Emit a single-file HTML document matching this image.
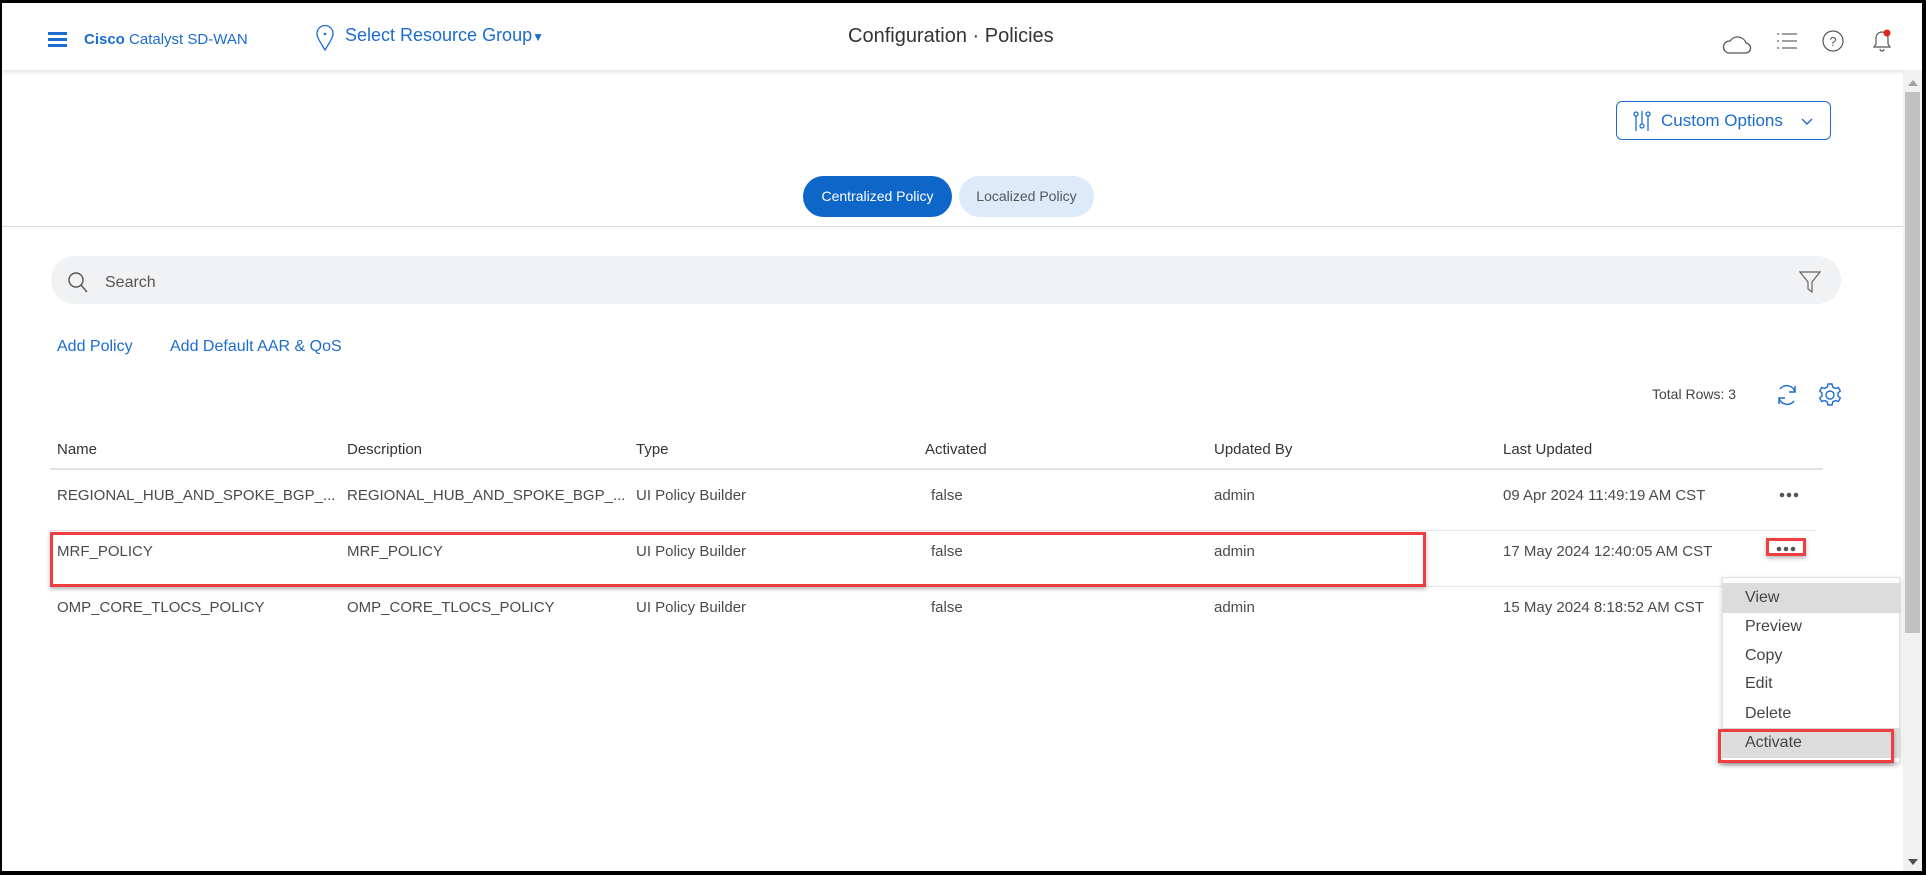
<!DOCTYPE html>
<html><head><meta charset="utf-8">
<style>
*{margin:0;padding:0;box-sizing:border-box}
body{width:1926px;height:875px;background:#000;position:relative;overflow:hidden;font-family:"Liberation Sans",Arial,sans-serif}
.page{position:absolute;left:2px;top:3px;width:1920px;height:868px;background:#fff;overflow:hidden}
.a{position:absolute;white-space:nowrap}
.hdr{position:absolute;left:0;top:0;width:1920px;height:67px;background:#fff;box-shadow:0 2px 4px rgba(0,0,0,.12)}
.blue{color:#1d6ccf}
.td{font-size:15px;color:#4a4a4a}
.th{font-size:15px;color:#333}
.mi{position:absolute;left:0;width:178px;height:30px;font-size:16px;color:#444;padding-left:22px;line-height:30px}
</style></head><body>
<div class="page">
<div class="hdr">
  <div class="a" style="left:46px;top:29px;width:19px;height:3px;background:#1d6ccf"></div>
  <div class="a" style="left:46px;top:35px;width:19px;height:3px;background:#1d6ccf"></div>
  <div class="a" style="left:46px;top:41px;width:19px;height:3px;background:#1d6ccf"></div>
  <div class="a blue" style="left:82px;top:28px;font-size:15px"><b>Cisco</b> Catalyst SD-WAN</div>
  <svg class="a" style="left:313px;top:21px" width="20" height="28" viewBox="0 0 20 28"><path d="M10 26C6 19 2 14 2 9.5A8 8 0 0 1 18 9.5C18 14 14 19 10 26Z" fill="none" stroke="#1d6ccf" stroke-width="1.3"/><circle cx="10" cy="10" r="1.3" fill="#1d6ccf"/></svg>
  <div class="a blue" style="left:343px;top:22px;font-size:18px">Select Resource Group<span style="font-size:12px">&#9660;</span></div>
  <div class="a" style="left:846px;top:22px;font-size:20px;color:#333">Configuration · Policies</div>
  <svg class="a" style="left:1720px;top:30px" width="30" height="22" viewBox="0 0 30 22"><path d="M7 20H23A5 5 0 0 0 24 10A9 9 0 0 0 8 8A6 6 0 0 0 7 20Z" fill="none" stroke="#555" stroke-width="1.3"/></svg>
  <svg class="a" style="left:1775px;top:28px" width="20" height="20" viewBox="0 0 20 20" stroke="#666" stroke-width="1.2"><path d="M0 3h2M5 3h15M0 10h2M5 10h15M0 17h2M5 17h15"/></svg>
  <svg class="a" style="left:1819px;top:26px" width="24" height="24" viewBox="0 0 24 24"><circle cx="12" cy="12" r="10" fill="none" stroke="#555" stroke-width="1.2"/><text x="12" y="17" font-size="13" text-anchor="middle" fill="#555" font-family="Liberation Sans">?</text></svg>
  <svg class="a" style="left:1868px;top:25px" width="24" height="26" viewBox="0 0 24 26"><path d="M4 19h16l-2-3v-6a6 6 0 0 0-12 0v6z M10 21a2 2 0 0 0 4 0" fill="none" stroke="#555" stroke-width="1.2"/><circle cx="17" cy="5" r="3.5" fill="#e0281d"/></svg>
</div>
<div class="a" style="left:1901px;top:67px;width:19px;height:801px;background:#f1f1f1"></div>
<div class="a" style="left:1906px;top:77px;width:0;height:0;border-left:5px solid transparent;border-right:5px solid transparent;border-bottom:6px solid #a3a3a3"></div>
<div class="a" style="left:1903px;top:89px;width:15px;height:541px;background:#c1c1c1"></div>
<div class="a" style="left:1906px;top:856px;width:0;height:0;border-left:5px solid transparent;border-right:5px solid transparent;border-top:6px solid #505050"></div>

<div class="a" style="left:1614px;top:98px;width:215px;height:39px;border:1.5px solid #1d6ccf;border-radius:6px"></div>
<svg class="a" style="left:1630px;top:107px" width="20" height="22" viewBox="0 0 20 22" fill="none" stroke="#1d6ccf" stroke-width="1.3"><circle cx="4" cy="4" r="2"/><path d="M4 6v15"/><circle cx="10" cy="16" r="2"/><path d="M10 1v13"/><circle cx="16" cy="4" r="2"/><path d="M16 6v15"/></svg>
<div class="a blue" style="left:1659px;top:108px;font-size:17px">Custom Options</div>
<svg class="a" style="left:1798px;top:114px" width="14" height="10" viewBox="0 0 14 10"><path d="M2 2l5 5 5-5" fill="none" stroke="#1d6ccf" stroke-width="1.4"/></svg>

<div class="a" style="left:801px;top:173px;width:149px;height:41px;border-radius:21px;background:#0f66c9;color:#fff;font-size:14px;line-height:41px;text-align:center">Centralized Policy</div>
<div class="a" style="left:957px;top:173px;width:135px;height:41px;border-radius:21px;background:#dceafa;color:#555;font-size:14px;line-height:41px;text-align:center">Localized Policy</div>
<div class="a" style="left:0;top:223px;width:1901px;height:1px;background:#dcdcdc"></div>

<div class="a" style="left:49px;top:253px;width:1790px;height:48px;border-radius:24px;background:#f1f2f4"></div>
<svg class="a" style="left:65px;top:268px" width="22" height="22" viewBox="0 0 22 22" fill="none" stroke="#555" stroke-width="1.4"><circle cx="9" cy="9" r="7"/><path d="M14 14l6 7"/></svg>
<div class="a" style="left:103px;top:271px;font-size:16px;color:#555">Search</div>
<svg class="a" style="left:1797px;top:267px" width="22" height="24" viewBox="0 0 22 24" fill="none" stroke="#666" stroke-width="1.2"><path d="M1 2h20l-8 10v10l-4-3v-7z"/></svg>

<div class="a blue" style="left:55px;top:335px;font-size:16px">Add Policy</div>
<div class="a blue" style="left:168px;top:335px;font-size:16px">Add Default AAR &amp; QoS</div>

<div class="a" style="left:1650px;top:383px;font-size:14px;color:#444">Total Rows: 3</div>
<svg class="a" style="left:1773px;top:380px" width="24" height="24" viewBox="0 0 24 24" fill="none" stroke="#1d6ccf" stroke-width="1.5"><path d="M20 9A8.5 8.5 0 0 0 5 6M4 15a8.5 8.5 0 0 0 15 3"/><path d="M20 3v6h-6M4 21v-6h6"/></svg>
<svg class="a" style="left:1815px;top:379px" width="26" height="26" viewBox="0 0 26 26" fill="none" stroke="#1d6ccf" stroke-width="1.4"><circle cx="13" cy="13" r="4"/><path d="M11 2h4l.7 3 2.6 1.5 3-1 2 3.5-2.3 2 0 3 2.3 2-2 3.5-3-1-2.6 1.5-.7 3h-4l-.7-3-2.6-1.5-3 1-2-3.5 2.3-2v-3l-2.3-2 2-3.5 3 1L10.3 5z"/></svg>

<div class="a th" style="left:55px;top:438px">Name</div>
<div class="a th" style="left:345px;top:438px">Description</div>
<div class="a th" style="left:634px;top:438px">Type</div>
<div class="a th" style="left:923px;top:438px">Activated</div>
<div class="a th" style="left:1212px;top:438px">Updated By</div>
<div class="a th" style="left:1501px;top:438px">Last Updated</div>
<div class="a" style="left:48px;top:465px;width:1773px;height:2px;background:#e2e2e2"></div>

<div class="a td" style="left:55px;top:484px">REGIONAL_HUB_AND_SPOKE_BGP_...</div>
<div class="a td" style="left:345px;top:484px">REGIONAL_HUB_AND_SPOKE_BGP_...</div>
<div class="a td" style="left:634px;top:484px">UI Policy Builder</div>
<div class="a td" style="left:929px;top:484px">false</div>
<div class="a td" style="left:1212px;top:484px">admin</div>
<div class="a td" style="left:1501px;top:484px">09 Apr 2024 11:49:19 AM CST</div>
<svg class="a" style="left:1776px;top:489px" width="22" height="6" viewBox="0 0 22 6" fill="#555"><circle cx="4" cy="3" r="2.3"/><circle cx="11" cy="3" r="2.3"/><circle cx="18" cy="3" r="2.3"/></svg>
<div class="a" style="left:48px;top:527px;width:1765px;height:1px;background:#e6e6e6"></div>

<div class="a td" style="left:55px;top:540px">MRF_POLICY</div>
<div class="a td" style="left:345px;top:540px">MRF_POLICY</div>
<div class="a td" style="left:634px;top:540px">UI Policy Builder</div>
<div class="a td" style="left:929px;top:540px">false</div>
<div class="a td" style="left:1212px;top:540px">admin</div>
<div class="a td" style="left:1501px;top:540px">17 May 2024 12:40:05 AM CST</div>
<svg class="a" style="left:1773px;top:543px" width="22" height="6" viewBox="0 0 22 6" fill="#555"><circle cx="4" cy="3" r="2.3"/><circle cx="11" cy="3" r="2.3"/><circle cx="18" cy="3" r="2.3"/></svg>
<div class="a" style="left:48px;top:583px;width:1765px;height:1px;background:#e6e6e6"></div>

<div class="a td" style="left:55px;top:596px">OMP_CORE_TLOCS_POLICY</div>
<div class="a td" style="left:345px;top:596px">OMP_CORE_TLOCS_POLICY</div>
<div class="a td" style="left:634px;top:596px">UI Policy Builder</div>
<div class="a td" style="left:929px;top:596px">false</div>
<div class="a td" style="left:1212px;top:596px">admin</div>
<div class="a td" style="left:1501px;top:596px">15 May 2024 8:18:52 AM CST</div>

<div class="a" style="left:48px;top:529px;width:1376px;height:55px;border:3px solid #ee3e42;box-shadow:0 2px 4px rgba(0,0,0,.3)"></div>
<div class="a" style="left:1764px;top:535px;width:40px;height:18px;border:3px solid #ee3e42;box-shadow:0 2px 4px rgba(0,0,0,.3)"></div>

<div class="a" style="left:1720px;top:574px;width:178px;height:186px;background:#fff;border:1px solid #e0e0e0;box-shadow:0 2px 5px rgba(0,0,0,.2)">
  <div class="mi" style="top:5px;background:#dcdcdc">View</div>
  <div class="mi" style="top:34px">Preview</div>
  <div class="mi" style="top:63px">Copy</div>
  <div class="mi" style="top:91px">Edit</div>
  <div class="mi" style="top:121px">Delete</div>
  <div class="mi" style="top:150px;background:#dcdcdc">Activate</div>
</div>
<div class="a" style="left:1716px;top:726px;width:176px;height:34px;border:3px solid #ee3e42;box-shadow:0 2px 4px rgba(0,0,0,.3)"></div>
</div>
</body></html>
